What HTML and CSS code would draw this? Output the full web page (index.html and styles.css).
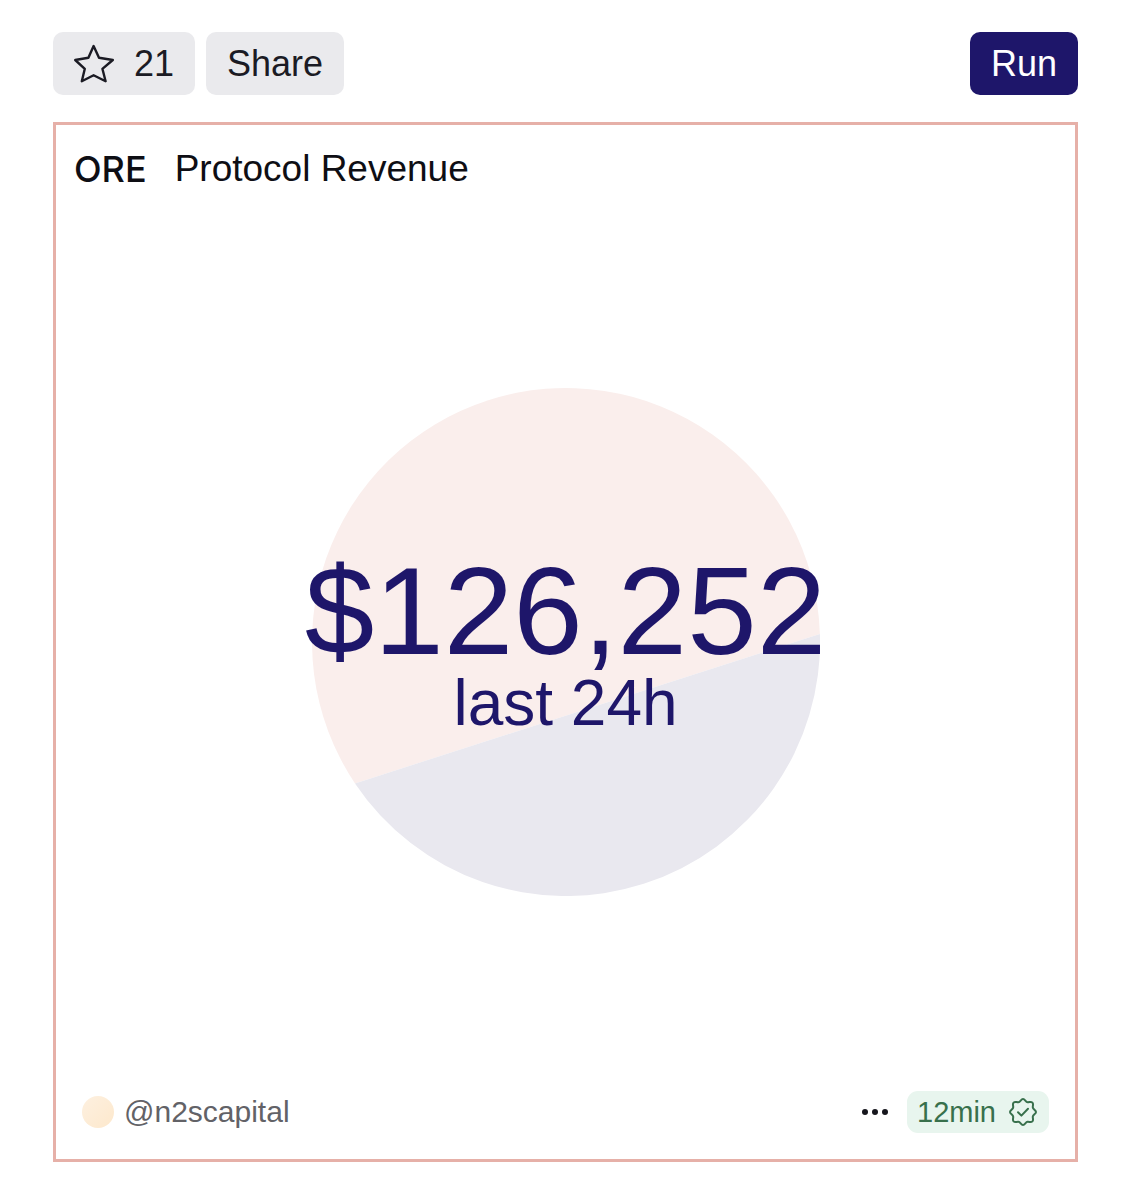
FILE: index.html
```
<!DOCTYPE html>
<html lang="en">
<head>
    <meta charset="UTF-8">
    <meta name="viewport" content="width=device-width, initial-scale=1.0">
    <title>ORE Protocol Revenue</title>
    <link rel="stylesheet" href="styles.css">
</head>
<body>
    <div id="wrap">
        <div class="toolbar">
            <button type="button" class="btn" aria-label="Star, 21">
                <svg class="star" viewBox="0 0 40 40" aria-hidden="true">
                    <path d="M19.6 2 L25 13.8 L38.8 16 L28.4 24.8 L31.6 37.2 L19.6 31.2 L7.8 37.2 L10.8 24.8 L1.2 16 L14.4 13.8 Z"/>
                </svg>
                <span>21</span>
            </button>
            <button type="button" class="btn">Share</button>
            <button type="button" class="btn run">Run</button>
        </div>

        <main class="card">
            <h1 class="card-head"><strong>ORE</strong><span>Protocol Revenue</span></h1>

            <div class="counter">
                <!-- watermark circle -->
                <svg class="mark" viewBox="0 0 508 508" aria-hidden="true">
                    <path class="mark-top" d="M43 395.4 A254 254 0 1 1 507.9 246 Z"/>
                    <path class="mark-bottom" d="M43 395.4 L507.9 246 A254 254 0 0 1 43 395.4 Z"/>
                </svg>
                <div class="counter-text">
                    <div class="value">$126,252</div>
                    <div class="label">last 24h</div>
                </div>
            </div>

            <footer class="card-foot">
                <a class="author" href="#"><span class="avatar"></span>@n2scapital</a>
                <button type="button" class="more" aria-label="More options">
                    <svg viewBox="0 0 28 8" aria-hidden="true">
                        <circle cx="4" cy="4" r="3"/>
                        <circle cx="14" cy="4" r="3"/>
                        <circle cx="24" cy="4" r="3"/>
                    </svg>
                </button>
                <button type="button" class="badge">
                    12min
                    <svg viewBox="0 0 30 30" aria-hidden="true">
                        <path d="M15 2 C17 2 17.6 5 19.6 5.2 C21.4 5.4 23 4.2 24.4 5.6 C25.8 7 24.6 8.6 24.8 10.4 C25 12.4 28 13 28 15 C28 17 25 17.6 24.8 19.6 C24.6 21.4 25.8 23 24.4 24.4 C23 25.8 21.4 24.6 19.6 24.8 C17.6 25 17 28 15 28 C13 28 12.4 25 10.4 24.8 C8.6 24.6 7 25.8 5.6 24.4 C4.2 23 5.4 21.4 5.2 19.6 C5 17.6 2 17 2 15 C2 13 5 12.4 5.2 10.4 C5.4 8.6 4.2 7 5.6 5.6 C7 4.2 8.6 5.4 10.4 5.2 C12.4 5 13 2 15 2 Z"/>
                        <path d="M10 15.2 L13.4 18.6 L20 11.8"/>
                    </svg>
                </button>
            </footer>
        </main>
    </div>
</body>
</html>
```

FILE: styles.css
```
* {
    margin: 0;
    padding: 0;
    box-sizing: border-box;
}
body {
    background: #fff;
    color: #0e0e14;
    font-family: "Liberation Sans", Arial, sans-serif;
    font-size: 36px;
}
button {
    border: 0;
    background: none;
    color: inherit;
    font: inherit;
    cursor: pointer;
}

#wrap {
    display: flex;
    flex-direction: column;
    gap: 27px;
    min-height: 100vh;
    padding: 32px 53px 38px;
}

/* toolbar */
.toolbar {
    display: flex;
    gap: 11px;
}
.btn {
    display: flex;
    align-items: center;
    gap: 20px;
    height: 63px;
    padding: 0 21px;
    border-radius: 10px;
    background: #eaeaed;
    color: #1b1b24;
}
.run {
    margin-left: auto;
    background: #1e166a;
    color: #fff;
}
.star {
    width: 40px;
    height: 40px;
    fill: none;
    stroke: #1b1b24;
    stroke-width: 2.4;
    stroke-linejoin: round;
}

/* card */
.card {
    flex: 1;
    display: flex;
    flex-direction: column;
    border: 3px solid #e6b0a8;
}
.card-head {
    display: flex;
    gap: 28px;
    padding: 22px 18px;
    font-size: 37px;
    font-weight: 400;
    line-height: 44px;
}
.card-head strong {
    font-family: Inter, sans-serif;
    font-size: 36px;
    font-weight: 500;
}

/* the text sits over the circle in one grid cell */
.counter {
    flex: 1;
    display: grid;
    place-items: center;
}
.mark,
.counter-text {
    grid-area: 1 / 1;
}
.mark {
    width: 508px;
    max-width: 100%;
}
.mark-top {
    fill: #faeeec;
}
.mark-bottom {
    fill: #e9e8ef;
}
.counter-text {
    z-index: 1;
    color: #1e166a;
    text-align: center;
}
.value {
    font-size: 125px;
    line-height: 122px;
}
.label {
    font-size: 64px;
    line-height: 62px;
}

/* footer */
.card-foot {
    display: flex;
    align-items: center;
    gap: 18px;
    padding: 20px 26px 26px;
    font-size: 30px;
}
.author {
    display: flex;
    align-items: center;
    gap: 10px;
    margin-right: auto;
    color: #626267;
    text-decoration: none;
}
.avatar {
    width: 32px;
    height: 32px;
    border-radius: 50%;
    background: linear-gradient(135deg, #fdf0e0, #fde8cc);
}
.more svg {
    display: block;
    width: 28px;
    height: 8px;
    fill: #16161d;
}
.badge {
    display: flex;
    align-items: center;
    gap: 12px;
    height: 42px;
    padding: 0 11px 0 10px;
    border-radius: 11px;
    background: #e8f5ee;
    color: #38704c;
    font-size: 29px;
}
.badge svg {
    width: 30px;
    height: 30px;
    fill: none;
    stroke: #38704c;
    stroke-width: 2;
    stroke-linecap: round;
    stroke-linejoin: round;
}
```
